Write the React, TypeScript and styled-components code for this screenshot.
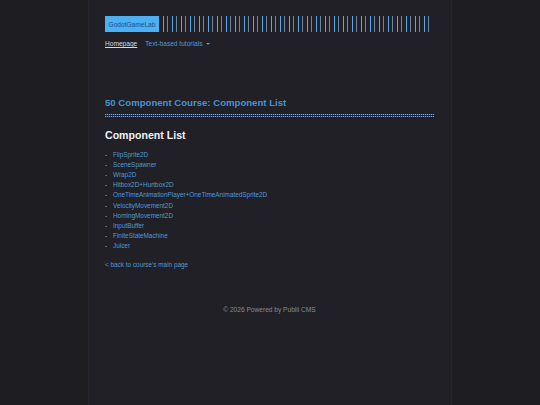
import { FC } from "react";
import styled, { createGlobalStyle } from "styled-components";

const GlobalStyle = createGlobalStyle`
  html, body {
    margin: 0;
    padding: 0;
    background: #1d1d22;
    font-family: "Liberation Sans", Arial, sans-serif;
  }
`;

const Page = styled.div`
  min-height: 405px;
  display: flex;
  justify-content: center;
`;

const Column = styled.div`
  width: 364px;
  box-sizing: border-box;
  min-height: 405px;
  padding: 16px 17px 0 16px;
  background: #202026;
  border-left: 1px solid #26262d;
  border-right: 1px solid #26262d;
`;

const Header = styled.header`
  display: flex;
  align-items: stretch;
  gap: 4px;
  height: 16px;
`;

const Logo = styled.a`
  display: flex;
  align-items: center;
  padding: 0 3.5px;
  background: #4cb0f2;
  color: #1b5386;
  font-size: 6.6px;
  text-decoration: none;
`;

const Stripes = styled.div`
  flex: 1;
  background: repeating-linear-gradient(
    90deg,
    #5aa6e6 0,
    #5aa6e6 1px,
    transparent 1px,
    transparent 4.5px,
    #6b86a8 4.5px,
    #6b86a8 5.5px,
    transparent 5.5px,
    transparent 9px
  );
  margin-right: 1px;
`;

const Nav = styled.nav`
  display: flex;
  align-items: center;
  gap: 8px;
  margin-top: 8px;
  font-size: 6.6px;
`;

const NavLink = styled.a<{ $active?: boolean }>`
  color: ${(p) => (p.$active ? "#d8d8dc" : "#4f9ad8")};
  text-decoration: ${(p) => (p.$active ? "underline" : "none")};
`;

const Caret = styled.span`
  display: inline-block;
  margin-left: 4px;
  border-left: 2px solid transparent;
  border-right: 2px solid transparent;
  border-top: 2px solid #4f9ad8;
  vertical-align: middle;
`;

const Title = styled.h1`
  margin: 50px 0 0;
  font-size: 9.6px;
  font-weight: bold;
  color: #4a90d0;
`;

const DotRule = styled.div`
  height: 3px;
  margin-top: 6px;
  background:
    repeating-linear-gradient(180deg, transparent 0 1px, #202026 1px 2px),
    repeating-linear-gradient(90deg, #6aaeea 0 1px, #2d4866 1px 2px);
`;

const Heading = styled.h2`
  margin: 12px 0 0;
  font-size: 10.6px;
  font-weight: bold;
  color: #f0f0f2;
`;

const List = styled.ul`
  list-style: none;
  margin: 8px 0 0;
  padding: 0;
`;

const Item = styled.li`
  display: flex;
  height: 10.2px;
  align-items: center;
  font-size: 6.4px;
  color: #4f9ad8;
`;

const Dash = styled.span`
  width: 8px;
  color: #8fa8c4;
`;

const Link = styled.a`
  color: #4f9ad8;
  text-decoration: none;
`;

const Back = styled.p`
  margin: 10px 0 0;
  font-size: 6.4px;
`;

const Footer = styled.footer`
  margin-top: 38px;
  text-align: center;
  font-size: 6.6px;
  color: #8a8a92;
`;

const items = [
  "FlipSprite2D",
  "SceneSpawner",
  "Wrap2D",
  "Hitbox2D+Hurtbox2D",
  "OneTimeAnimationPlayer+OneTimeAnimatedSprite2D",
  "VelocityMovement2D",
  "HomingMovement2D",
  "InputBuffer",
  "FiniteStateMachine",
  "Juicer",
];

const App: FC = () => {
  return (
    <>
      <GlobalStyle />
      <Page>
        <Column>
          <Header>
            <Logo href="#">GodotGameLab</Logo>
            <Stripes />
          </Header>
          <Nav>
            <NavLink $active href="#">Homepage</NavLink>
            <NavLink href="#">
              Text-based tutorials
              <Caret />
            </NavLink>
          </Nav>
          <Title>50 Component Course: Component List</Title>
          <DotRule />
          <Heading>Component List</Heading>
          <List>
            {items.map((it) => (
              <Item key={it}>
                <Dash>-</Dash>
                <Link href="#">{it}</Link>
              </Item>
            ))}
          </List>
          <Back>
            <Link href="#">&lt; back to course's main page</Link>
          </Back>
          <Footer>© 2026 Powered by Publii CMS</Footer>
        </Column>
      </Page>
    </>
  );
};

export default App;
